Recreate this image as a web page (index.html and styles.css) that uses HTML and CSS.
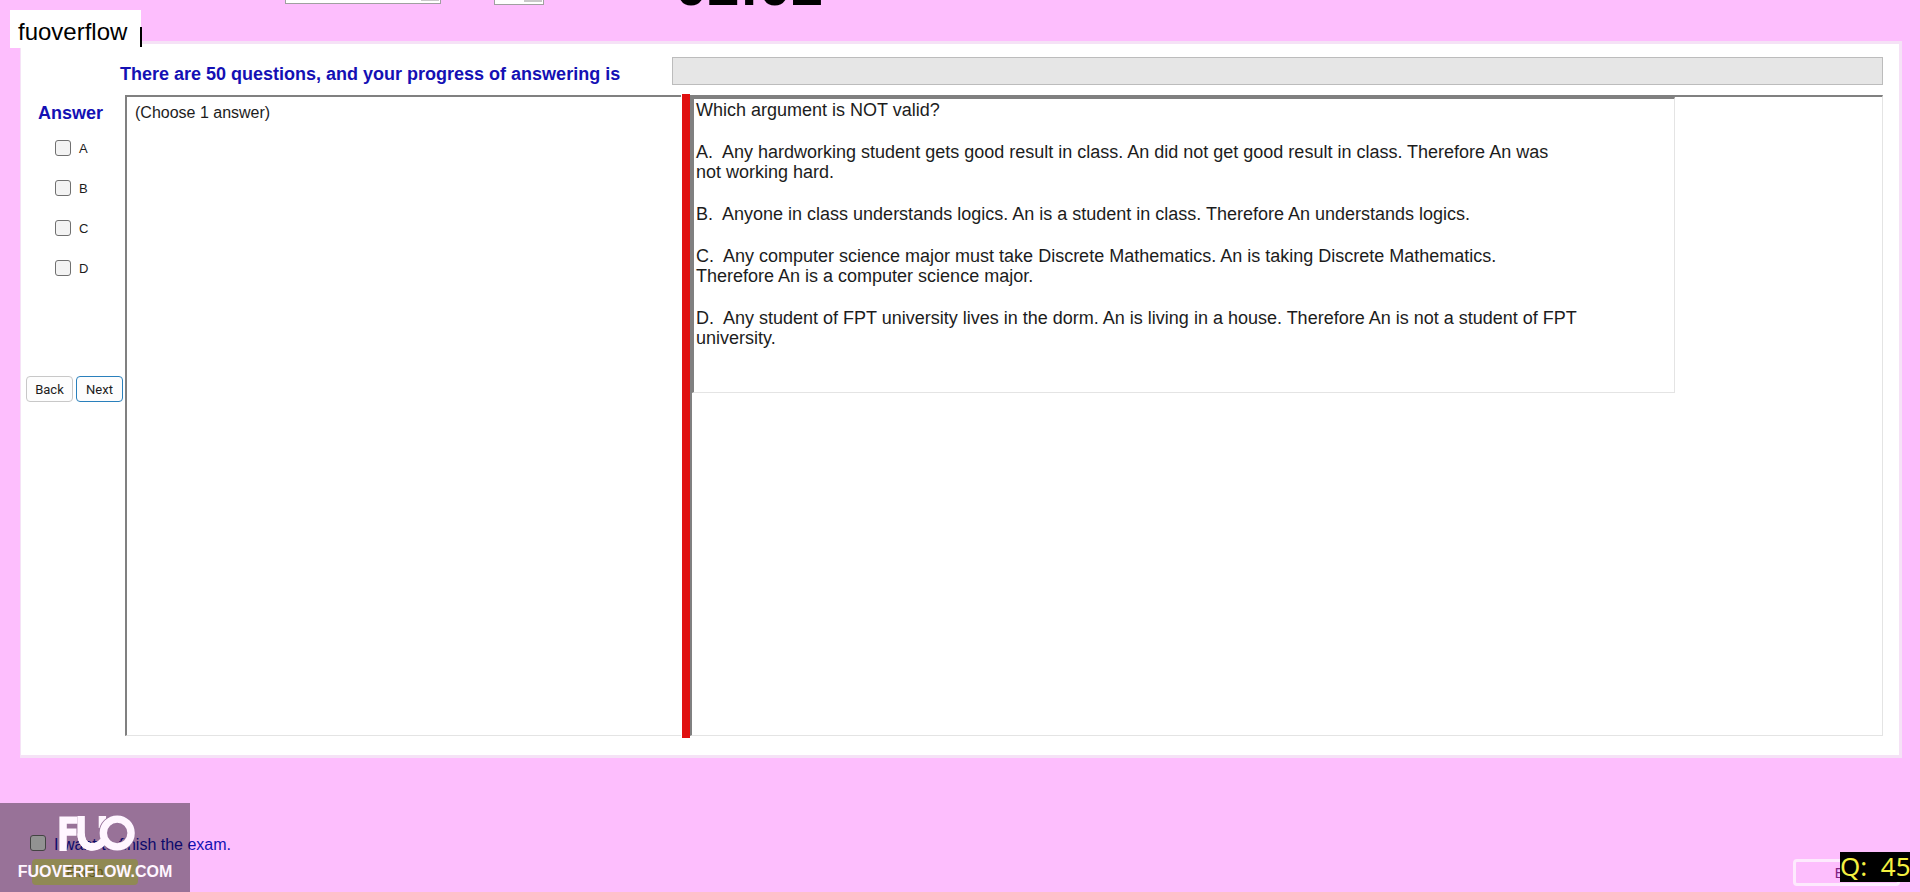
FILE: index.html
```
<!DOCTYPE html>
<html lang="en">
<head>
  <meta charset="UTF-8">
  <meta name="viewport" content="width=device-width, initial-scale=1.0">
  <title>Exam</title>
  <link rel="stylesheet" href="styles.css">
</head>
<body>
  <header class="topbar">
    <select class="combo combo-wide" aria-label="Font"><option></option></select>
    <select class="combo" aria-label="Size"><option></option></select>
    <div class="timer">02:02</div>
  </header>

  <main class="panel">
    <div class="progress-row">
      <h1 class="heading" id="progress-label">There are 50 questions, and your progress of answering is</h1>
      <div class="progress" role="progressbar" aria-labelledby="progress-label"></div>
    </div>

    <div class="workspace">
      <form class="answers">
        <h2 class="heading">Answer</h2>
        <div class="choices">
          <label class="choice"><input type="checkbox" class="check">A</label>
          <label class="choice"><input type="checkbox" class="check">B</label>
          <label class="choice"><input type="checkbox" class="check">C</label>
          <label class="choice"><input type="checkbox" class="check">D</label>
        </div>
        <div class="nav">
          <button type="button" class="btn">Back</button>
          <button type="button" class="btn btn-active">Next</button>
        </div>
      </form>

      <section class="pane note">(Choose 1 answer)</section>
      <div class="splitter"></div>
      <section class="pane viewer">
        <div class="question">
          <p>Which argument is NOT valid?</p>
          <p>A.&nbsp; Any hardworking student gets good result in class. An did not get good result in class. Therefore An was<br>not working hard.</p>
          <p>B.&nbsp; Anyone in class understands logics. An is a student in class. Therefore An understands logics.</p>
          <p>C.&nbsp; Any computer science major must take Discrete Mathematics. An is taking Discrete Mathematics.<br>Therefore An is a computer science major.</p>
          <p>D.&nbsp; Any student of FPT university lives in the dorm. An is living in a house. Therefore An is not a student of FPT<br>university.</p>
        </div>
      </section>
    </div>
  </main>

  <footer class="bottombar">
    <div class="finish">
      <label class="finish-label"><input type="checkbox" class="check">I want to finish the exam.</label>
      <button type="button" class="btn-finish">Finish</button>
    </div>
    <button type="button" class="btn-exit">Exit</button>
  </footer>

  <div class="tag">fuoverflow</div>
  <div class="caret"></div>

  <div class="watermark">
    <svg class="logo" viewBox="0 0 82 40" width="82" height="40" aria-hidden="true">
      <path d="M6.500 39V5.500H22M6.500 18.500H21" />
      <path d="M26 1V20C26 38 44 37 50 28M49 1V14" />
      <circle class="logo-gap" cx="65" cy="19.500" r="15" />
      <circle cx="65" cy="19.500" r="15" />
      <path d="M26 20C26 38 44 38 51 27" />
    </svg>
    <div class="site">FUOVERFLOW.COM</div>
  </div>

  <div class="counter">Q:&nbsp; 45</div>
</body>
</html>
```
FILE: styles.css
```
:root {
  --background: #fdbefd;
  --panel-edge: #f5e2f6;
  --blue: #1410b4;
  --line-dark: #808080;
  --line-light: #e4e4e4;
}

* {
  box-sizing: border-box;
}

body {
  margin: 0;
  min-height: 100vh;
  display: flex;
  flex-direction: column;
  position: relative;
  overflow: hidden;
  background-color: var(--background);
  font-family: "Liberation Sans", Arial, sans-serif;
  color: #1c1c1c;
}

h1, h2, p {
  margin: 0;
}

/* toolbar, mostly scrolled out of view */
.topbar {
  height: 41px;
  padding-left: 285px;
  display: flex;
  align-items: flex-start;
}

.combo {
  appearance: none;
  width: 50px;
  height: 24px;
  margin-top: -19px;
  border: 1px solid #a0a0a0;
  border-radius: 0;
  background: linear-gradient(#c8c8c8, #c8c8c8) right 1px top / 18px 20px no-repeat #fff;
}

.combo-wide {
  width: 156px;
  margin-top: -20px;
  margin-right: 53px;
}

.timer {
  margin-top: -45px;
  margin-left: 131px;
  font-size: 58px;
  line-height: 60px;
  font-weight: bold;
  color: #000;
}

.panel {
  flex: 1;
  display: flex;
  flex-direction: column;
  margin: 0 18px 0 20px;
  padding: 13px 16px 19px 3px;
  border: 3px solid var(--panel-edge);
  border-left-width: 1px;
  background-color: #fff;
}

.heading {
  font-size: 18px;
  line-height: 20px;
  font-weight: bold;
  color: var(--blue);
}

.progress-row {
  display: flex;
  justify-content: space-between;
  padding-left: 96px;
}

.progress-row .heading {
  padding-top: 7px;
}

.progress {
  width: 1211px;
  height: 28px;
  background-color: #e6e6e6;
  border: 1px solid #bcbcbc;
}

.workspace {
  flex: 1;
  display: flex;
  margin-top: 10px;
}

.answers {
  width: 101px;
  padding-top: 8px;
}

.answers .heading {
  padding-left: 14px;
}

.choices {
  display: flex;
  flex-direction: column;
  gap: 20px;
  padding: 15px 0 0 31px;
}

.choice {
  display: flex;
  align-items: center;
  gap: 8px;
  height: 20px;
  font-size: 13px;
}

.check {
  appearance: none;
  width: 16px;
  height: 16px;
  margin: 0;
  border: 1px solid #707070;
  border-radius: 3px;
  background-color: #f3f3f3;
}

.nav {
  display: flex;
  gap: 3px;
  padding: 98px 0 0 2px;
}

.btn {
  width: 47px;
  height: 26px;
  padding: 0;
  border: 1px solid #c8c8c8;
  border-radius: 4px;
  background-color: #fdfdfd;
  font-family: Roboto, sans-serif;
  font-size: 13px;
  color: #1c1c1c;
}

.btn-active {
  border-color: #2a80bc;
}

.pane {
  border: 1px solid var(--line-light);
  border-top: 2px solid var(--line-dark);
  border-left: 2px solid var(--line-dark);
}

.note {
  width: 556px;
  padding: 6px 8px;
  border-right: 0;
  font-size: 16px;
  line-height: 20px;
}

.splitter {
  width: 8px;
  margin: -1px 0 -2px 1px;
  background-color: #e01010;
}

.viewer {
  flex: 1;
}

.question {
  width: 983px;
  height: 296px;
  padding: 1px 2px;
  border: 1px solid var(--line-light);
  border-top: 2px solid var(--line-dark);
  border-left: 2px solid var(--line-dark);
  display: flex;
  flex-direction: column;
  gap: 22px;
  font-size: 18px;
  line-height: 20px;
}

.bottombar {
  height: 134px;
  padding: 77px 20px 0 30px;
  display: flex;
  justify-content: space-between;
}

.finish-label {
  display: flex;
  gap: 8px;
  font-size: 16px;
  line-height: 20px;
  color: var(--blue);
}

.btn-finish {
  width: 106px;
  height: 26px;
  margin: 4px 2px;
  border: 0;
  border-radius: 4px;
  background-color: #f0e48c;
  font-size: 14px;
  color: #a09030;
}

.btn-exit {
  width: 107px;
  height: 27px;
  margin-top: 24px;
  border: 3px solid #fdeafd;
  border-radius: 4px;
  background-color: transparent;
  font-size: 14px;
  color: #802080;
}

/* overlays */
.tag {
  position: absolute;
  top: 10px;
  left: 10px;
  width: 131px;
  height: 38px;
  padding-left: 8px;
  background-color: #fff;
  font-size: 24px;
  line-height: 44px;
  color: #000;
}

.caret {
  position: absolute;
  top: 27px;
  left: 140px;
  width: 2px;
  height: 20px;
  background-color: #000;
}

.watermark {
  position: absolute;
  left: 0;
  bottom: 0;
  width: 190px;
  height: 89px;
  padding-top: 12px;
  display: flex;
  flex-direction: column;
  align-items: center;
  background-color: rgba(0, 0, 0, 0.4);
}

.logo {
  fill: none;
  stroke: #fff6ff;
  stroke-width: 8;
}

.logo-gap {
  stroke: #97729a;
  stroke-width: 10;
}

.site {
  font-size: 16px;
  line-height: 40px;
  font-weight: bold;
  color: #fff6ff;
}

.counter {
  position: absolute;
  right: 10px;
  bottom: 10px;
  width: 70px;
  height: 30px;
  background-color: #000;
  font-family: "Noto Sans", sans-serif;
  font-size: 26px;
  line-height: 28px;
  text-align: right;
  white-space: nowrap;
  color: #f4f040;
}
```
